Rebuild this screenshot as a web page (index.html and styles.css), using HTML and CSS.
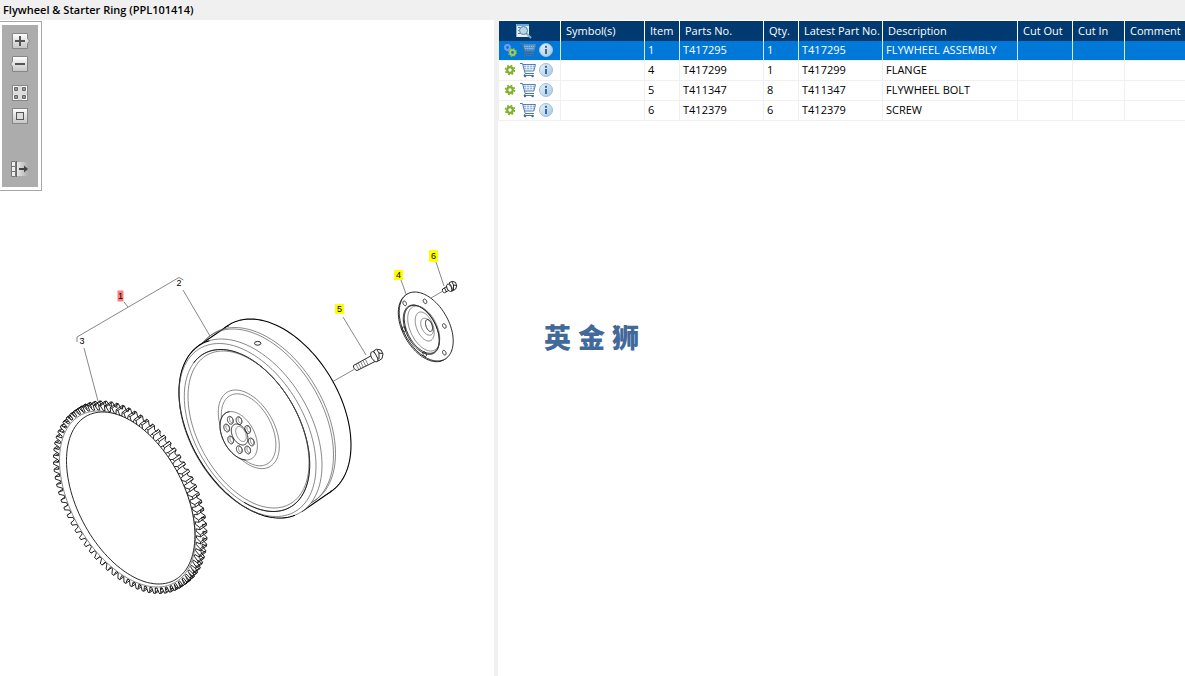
FILE: index.html
```
<!DOCTYPE html>
<html lang="en">
<head>
<meta charset="utf-8">
<title>Flywheel &amp; Starter Ring (PPL101414)</title>
<link rel="stylesheet" href="styles.css">
</head>
<body>
<svg class="defs" aria-hidden="true">
  <defs>
    <linearGradient id="face" x1="0" y1="0" x2="0" y2="1"><stop offset="0" stop-color="#fff"/><stop offset="1" stop-color="#c4c4c4"/></linearGradient>
    <linearGradient id="fade" x1="0" y1="0" x2="1" y2="0"><stop offset="0" stop-color="#e8e8e8"/><stop offset="1" stop-color="#acacac"/></linearGradient>
    <linearGradient id="disc" x1="0" y1="0" x2="1" y2="1"><stop offset="0" stop-color="#e9f3fa"/><stop offset="1" stop-color="#a5c8e2"/></linearGradient>
    <symbol id="cart" viewBox="0 0 16 16">
      <path d="M3.500 3h12l-1.700 5.500H5z" fill="#d3e2f2"/>
      <path d="M4 4.500h11M4.500 6.500h10" stroke="#9ab8da"/>
      <path d="M6.500 3v5M9.500 3v5M12.500 3v5" stroke="#fff" stroke-width="0.6"/>
      <path d="M3 2.500h12.500l-1.700 6.500H5" fill="none" stroke="#5580b5"/>
      <path d="M0 1.500h2.500l2.700 10h8.800M5.500 11.500l-1.500 2h9.500" fill="none" stroke="#4c78ad"/>
      <circle cx="5" cy="14" r="1.200" fill="#3f6ca3"/><circle cx="12.600" cy="14" r="1.200" fill="#3f6ca3"/>
    </symbol>
    <symbol id="cart-on" viewBox="0 0 16 16">
      <path d="M3.500 3h12l-1.700 5.500H5z" fill="#4d93d8"/>
      <path d="M4 4.500h11M4.500 6.500h10" stroke="#9dbbd9" stroke-dasharray="1.500 0.800"/>
      <path d="M3 2.500h12.500l-1.700 6.500H5" fill="none" stroke="#6c829e"/>
      <path d="M0 1.500h2.500l2.700 10h8.800M5.500 11.500l-1.500 2h9.500" fill="none" stroke="#5b6f8c"/>
      <circle cx="5" cy="14" r="1.200" fill="#4f6584"/><circle cx="12.600" cy="14" r="1.200" fill="#4f6584"/>
    </symbol>
    <symbol id="info" viewBox="0 0 14 14">
      <circle cx="7" cy="7" r="6.5" fill="url(#disc)" stroke="#9dbfdb"/>
      <rect x="6" y="2.8" width="2" height="2" fill="#3b6a9b"/><rect x="6" y="6" width="2" height="5" fill="#3b6a9b"/>
    </symbol>
    <symbol id="gear" viewBox="0 0 12 12">
      <circle cx="6" cy="6" r="4.5" fill="none" stroke="#7fb02a" stroke-width="1.6" stroke-dasharray="1.8 1.734"/>
      <circle cx="6" cy="6" r="2.800" fill="none" stroke="#7fb02a" stroke-width="2.200"/>
    </symbol>
    <symbol id="gears" viewBox="0 0 14 14">
      <circle cx="4.5" cy="4.5" r="3.9" fill="none" stroke="#2f67cd" stroke-width="1.4" stroke-dasharray="1.6 1.46"/>
      <circle cx="4.5" cy="4.5" r="2.4" fill="none" stroke="#6fa0ee" stroke-width="2"/>
      <circle cx="9.5" cy="9.5" r="3.9" fill="none" stroke="#84b534" stroke-width="1.4" stroke-dasharray="1.6 1.46"/>
      <circle cx="9.5" cy="9.5" r="2.4" fill="none" stroke="#a5cc5c" stroke-width="2"/>
    </symbol>
  </defs>
</svg>

<header class="title-bar"><h1>Flywheel &amp; Starter Ring (PPL101414)</h1></header>
<main class="workspace">
  <section class="diagram" aria-label="Exploded diagram">
    <svg id="drawing" class="drawing" width="494" height="656" viewBox="0 20 494 656" role="img" aria-label="Flywheel and starter ring"></svg>
    <div class="toolbar">
      <div class="tools">
        <button type="button" aria-label="Zoom in"><svg width="20" height="16" viewBox="0 0 20 16"><path d="M2.5.5h15v5l2 2.5-2 2.5v5h-15z" fill="url(#face)" stroke="#868686"/><path d="M5 8h10M10 3v10" stroke="#555" stroke-width="2"/></svg></button>
        <button type="button" aria-label="Zoom out"><svg width="20" height="16" viewBox="0 0 20 16"><path d="M17.5.5h-15v5L.5 8l2 2.5v5h15z" fill="url(#face)" stroke="#868686"/><path d="M5 8h10" stroke="#555" stroke-width="2"/></svg></button>
        <button type="button" class="group" aria-label="Fit to window"><svg width="20" height="16" viewBox="0 0 20 16"><rect x="2.5" y=".5" width="15" height="15" fill="#fff" stroke="#868686"/><path d="M8 1h4v5h5v4h-5v5H8v-5H3V6h5z" fill="#ddd"/><path d="M4.500 2.500h3v3h-3zM12.500 2.500h3v3h-3zM4.500 10.500h3v3h-3zM12.500 10.500h3v3h-3z" fill="#999" stroke="#666"/></svg></button>
        <button type="button" aria-label="Actual size"><svg width="20" height="16" viewBox="0 0 20 16"><rect x="2.5" y=".5" width="15" height="15" fill="url(#face)" stroke="#868686"/><rect x="6.500" y="4.500" width="7" height="7" fill="#ddd" stroke="#555"/></svg></button>
        <button type="button" class="last" aria-label="Show parts list"><svg width="20" height="16" viewBox="0 0 20 16"><path d="M1.500.500h4v15h-4z" fill="#eee" stroke="#777"/><path d="M2 5.500h3M2 10.500h3" stroke="#777"/><path d="M7 1h11v14H7z" fill="url(#fade)"/><path d="M6.500 0v16" stroke="#666"/><path d="M9 8h6" stroke="#444" stroke-width="2"/><path d="M14 4.500l4 3.500-4 3.500z" fill="#444"/></svg></button>
      </div>
    </div>
  </section>
  <section class="parts">
    <table>
      <colgroup><col class="c-icons"><col class="c-part"><col class="c-num"><col class="c-part"><col class="c-num"><col class="c-part"><col class="c-desc"><col class="c-out"><col class="c-in"><col></colgroup>
      <thead>
        <tr>
          <th scope="col" class="icons"><button type="button" aria-label="Search list"><svg width="18" height="16" viewBox="0 0 18 16"><path d="M1 1h13v13H1z" fill="#e8f0f6"/><path d="M1 1h13v2H1z" fill="#69a8db"/><path d="M1.500 1v13" stroke="#7db4de"/><path d="M3 4.500h2M3 7.500h1M3 10.500h2" stroke="#547fa9"/><path d="M11.500 10.500l4.500 4.500" stroke="#87a9c8" stroke-width="2"/><circle cx="8.500" cy="7.500" r="4" fill="#b9d5eb" stroke="#5c7d9e"/></svg></button></th>
          <th scope="col">Symbol(s)</th><th scope="col">Item</th><th scope="col">Parts No.</th><th scope="col">Qty.</th><th scope="col">Latest Part No.</th><th scope="col">Description</th><th scope="col">Cut Out</th><th scope="col">Cut In</th><th scope="col">Comment</th>
        </tr>
      </thead>
      <tbody>
        <tr class="selected"><td><div class="actions"><button type="button" aria-label="Assembly"><svg width="14" height="14"><use href="#gears"/></svg></button><button type="button" aria-label="Add to cart"><svg width="16" height="16"><use href="#cart-on"/></svg></button><button type="button" aria-label="Information"><svg width="14" height="14"><use href="#info"/></svg></button></div></td><td></td><td>1</td><td>T417295</td><td>1</td><td>T417295</td><td>FLYWHEEL ASSEMBLY</td><td></td><td></td><td></td></tr>
        <tr><td><div class="actions"><button type="button" aria-label="Part"><svg width="12" height="12"><use href="#gear"/></svg></button><button type="button" aria-label="Add to cart"><svg width="16" height="16"><use href="#cart"/></svg></button><button type="button" aria-label="Information"><svg width="14" height="14"><use href="#info"/></svg></button></div></td><td></td><td>4</td><td>T417299</td><td>1</td><td>T417299</td><td>FLANGE</td><td></td><td></td><td></td></tr>
        <tr><td><div class="actions"><button type="button" aria-label="Part"><svg width="12" height="12"><use href="#gear"/></svg></button><button type="button" aria-label="Add to cart"><svg width="16" height="16"><use href="#cart"/></svg></button><button type="button" aria-label="Information"><svg width="14" height="14"><use href="#info"/></svg></button></div></td><td></td><td>5</td><td>T411347</td><td>8</td><td>T411347</td><td>FLYWHEEL BOLT</td><td></td><td></td><td></td></tr>
        <tr><td><div class="actions"><button type="button" aria-label="Part"><svg width="12" height="12"><use href="#gear"/></svg></button><button type="button" aria-label="Add to cart"><svg width="16" height="16"><use href="#cart"/></svg></button><button type="button" aria-label="Information"><svg width="14" height="14"><use href="#info"/></svg></button></div></td><td></td><td>6</td><td>T412379</td><td>6</td><td>T412379</td><td>SCREW</td><td></td><td></td><td></td></tr>
      </tbody>
    </table>
    <div class="brand" lang="zh"><span>英</span><span>金</span><span>狮</span></div>
  </section>
</main>
<script src="drawing.js"></script>
</body>
</html>
```
FILE: styles.css
```
* { box-sizing: border-box; }
body {
  margin: 0;
  min-height: 100vh;
  display: flex;
  flex-direction: column;
  background: #fff;
  color: #000;
  font-family: "Open Sans", "Noto Sans", sans-serif;
  font-size: 11px;
}
.defs { position: absolute; width: 0; height: 0; }
button { display: block; margin: 0; padding: 0; border: 0; background: none; cursor: pointer; }
button svg { display: block; }
.title-bar { height: 20px; padding: 0 3px; background: #f0f0f0; }
h1 { margin: 0; font-size: 11px; line-height: 20px; font-weight: 600; }
.workspace {
  flex: 1;
  display: grid;
  grid-template-columns: minmax(0, 498fr) minmax(0, 687fr);
}
.diagram { position: relative; border-right: 4px solid #f0f0f0; overflow: hidden; }
.drawing { display: block; }
.toolbar {
  position: absolute;
  left: 0;
  top: 1px;
  padding: 3px 3px 3px 2px;
  border: 1px solid #a5a5a5;
  border-left: 0;
  background: #fff;
}
.tools { display: flex; flex-direction: column; gap: 7px; padding: 8px 8px 10px; background: #acacac; }
.tools .group { margin-top: 6px; }
.tools .last { margin-top: 30px; }

.parts { padding-top: 1px; }
table { width: 100%; table-layout: fixed; border-collapse: separate; border-spacing: 0; border-left: 1px solid #f0f0f0; }
.c-icons { width: 62px; }
.c-part { width: 84px; }
.c-num { width: 35px; }
.c-desc { width: 135px; }
.c-out { width: 55px; }
.c-in { width: 52px; }
th, td { height: 20px; padding: 0 0 0 3px; text-align: left; font-weight: 400; white-space: nowrap; border-right: 1px solid #f0f0f0; }
th { padding-left: 5px; background: #003a70; color: #fff; line-height: 20px; border-right-color: #fff; }
td { border-bottom: 1px solid #f0f0f0; line-height: 17px; vertical-align: top; }
th:last-child, td:last-child { border-right: 0; }
.selected td { background: #0078d7; color: #fff; border-right-color: #d5e7f6; }
th.icons { padding: 0; }
.icons button { margin: 0 auto 0 16px; }
td:first-child { padding-left: 4px; }
.actions { display: grid; grid-template-columns: 14px 16px 14px; gap: 3px; align-items: center; justify-items: center; height: 18px; }
.brand {
  display: flex;
  gap: 7px;
  margin: 196px 0 0 46px;
  color: #41699a;
  font-family: "Noto Sans CJK SC", sans-serif;
  font-size: 27px;
  font-weight: 900;
  line-height: 40px;
}

.ink { fill: none; stroke: #111; stroke-width: 0.9; }
.bold { fill: #fff; stroke: #000; stroke-width: 1.1; }
.thin { fill: none; stroke: #555; stroke-width: 0.7; }
.solid { fill: #fff; }
.tag-on { fill: #ff7f7f; }
.tag { fill: #ff0; }
.num { font-family: "Liberation Sans", Arial, sans-serif; font-size: 9px; text-anchor: middle; }
```
FILE: drawing.js
```
const svg = document.getElementById("drawing");
const make = (name, attrs, text) => {
  const node = document.createElementNS("http://www.w3.org/2000/svg", name);
  for (const key in attrs) node.setAttribute(key, attrs[key]);
  if (text) node.textContent = text;
  svg.appendChild(node);
};
const path = (d, cls) => make("path", { d, class: cls });

// Point on a slanted ellipse with half-width w, half-height h and lean b.
const at = (e, t) => {
  const [cx, cy, w, h, b] = e;
  const d = Math.sqrt(h * h - b * b);
  return [cx + w * Math.cos(t), cy + b * Math.cos(t) + d * Math.sin(t)];
};
const line = (pts) => "M" + pts.map((p) => p[0].toFixed(2) + " " + p[1].toFixed(2)).join("L");
const trace = (pts) => line(pts) + "Z";
const oval = (e, cls) => {
  const pts = [];
  for (let i = 0; i < 120; i++) pts.push(at(e, (i / 120) * 2 * Math.PI));
  path(trace(pts), cls);
};
const arc = (e, from, to, cls) => {
  const pts = [];
  for (let i = 0; i <= 80; i++) pts.push(at(e, from + ((to - from) * i) / 80));
  path(line(pts), cls);
};

// Starter ring
const TEETH = 76;
const tip = [127, 499.5, 73.5, 94, 41];
const root = [127.5, 499, 69, 89, 39];
const shift = ([x, y]) => [x + 6.5, y - 4.5];
const profile = [];
const edges = [];
for (let i = 0; i < TEETH; i++) {
  const a = (k) => ((i + k) / TEETH) * 2 * Math.PI;
  const quad = [at(root, a(0)), at(tip, a(0.2)), at(tip, a(0.5)), at(root, a(0.65))];
  profile.push(...quad);
  edges.push(quad[1], quad[2]);
}
path(trace(profile.map(shift)), "ink solid");
edges.forEach((p) => path(line([p, shift(p)]), "ink"));
path(trace(profile), "ink solid");
oval([127.500, 499, 68, 88, 38.500], "thin solid");
oval([130.7, 498, 64.2, 86, 37.500], "ink solid");

// Flywheel body
const front = [250.5, 428.5, 71.5, 89.5, 36.5];
const back = [279.5, 408.5, 71.5, 89.5, 36.5];
const depth = Math.sqrt(89.5 ** 2 - 36.5 ** 2);
const tangent = Math.atan2(29 * depth, 20 * 71.5 + 29 * 36.5);
oval(back, "bold");
path(trace([at(front, tangent), at(back, tangent), at(back, tangent + Math.PI), at(front, tangent + Math.PI)]), "bold");
oval([279, 409, 70.8, 88.800, 36], "solid");
oval([264, 417, 71.500, 89.500, 36.500], "thin");
oval([262, 418.500, 71.500, 89.500, 36.500], "thin");
oval(front, "thin solid");
arc(front, 0.9, 4.1, "bold");
oval([247.5, 430, 68.500, 86.500, 36], "thin");
const rim = [247, 430.5, 62.700, 81, 34];
oval(rim, "thin");
arc(rim, 3.7, 7.9, "ink");
oval([248.5, 429.5, 60.500, 78.500, 33], "thin");
oval([248.8, 429.3, 30.500, 39.300, 17], "thin");
oval([248.6, 429.8, 27.300, 36, 15], "thin");
oval([238.7, 435.8, 18.700, 24.200, 10], "thin solid");
arc([238.7, 435.8, 18.700, 24.200, 10], 1.2, 4.2, "ink");
oval([239.6, 434.5, 8.300, 10.500, 4], "ink");
oval([241, 434, 5.300, 7.500, 3], "thin");
[[230.3, 420.3], [239, 420.7], [247.7, 429.5], [251.3, 442], [247.7, 450], [239.3, 449.7], [230.7, 440], [226.7, 428]].forEach(([x, y]) => {
  oval([x, y, 2.900, 3.900, 1], "ink");
  oval([x + 1, y - 0.5, 1.800, 3, 1], "thin");
});
make("ellipse", { cx: 257.7, cy: 343.3, rx: 3.2, ry: 1.9, class: "ink" });

// Flange
oval([425.3, 327.2, 27, 34.500, 14.5], "ink solid");
oval([426.2, 326.5, 27, 34.500, 14.5], "ink solid");
oval([421.3, 329.7, 18, 24.700, 11], "ink");
oval([421.8, 329.3, 17.500, 24, 10.800], "ink");
oval([423.7, 328.5, 16, 22.500, 10], "thin");
oval([424.7, 326.5, 9.500, 14.500, 6], "thin");
oval([427, 326.7, 6.300, 8.500, 3.5], "thin");
oval([429, 325.5, 3.500, 6, 2.500], "ink");
[[404.7, 303.3], [425, 301.3], [444.3, 326], [444.3, 352.7], [424.7, 354.2], [403.7, 329.3]].forEach(([x, y]) => {
  oval([x, y, 1.800, 2.300, 0.8], "ink");
});

// Flywheel bolt
path("M353.5 365.500l19-10.500 3.500 6-19 9.500c-2 0-4-3-3.500-5z", "ink solid");
path("M356 364l3 6M358.300 363l3 6M360.600 361.700l3 6M363 360.500l3 6M365.300 359.200l3 6", "thin");
path("M371.500 352c2-2 8 5 6 9.500-3 2-9-6-6-9.500z", "ink solid");
path("M373.500 351l3-1.800 4.500.8 2 4-1 4.500-3.500 2.500c-1-4-3-7-5-10z", "ink solid");
path("M377 350l2 3 3.500.5M379 353v6", "ink");

// Screw
path("M442.500 289l6-3.500 2 4-6 3.300c-1.500 0-2.500-2-2-3.800z", "ink solid");
path("M444.500 288l2 4M446.700 287l2 4", "ink");
path("M447 284.500c2-2 6 3.500 4.500 7-3 .5-6-4-4.500-7z", "ink solid");
path("M449 283l3-1.700 3.500 1 1.200 3.500-1 3.200-3.200 2c0-3-1.500-6-3.500-8z", "ink solid");
path("M452 282l1.500 3 3 .5M453.500 285v5", "ink");

// Leader lines
path("M77 342v-5L179 277.500l4.500 2.500M124 302l4 5M84 348l14 53M183 290l27 46M343 317l23 38M332 382l22-12.500M401 280l5 14M436 262l8 24M431 298l12-7", "thin");

// Callouts
[["1", 120.5, 296, "tag-on", 6, 11], ["4", 398.5, 275, "tag", 9, 10], ["5", 339.500, 309, "tag", 9, 10], ["6", 433.500, 256, "tag", 9, 12]].forEach(([n, x, y, cls, w, h]) => {
  make("rect", { x: x - w / 2, y: y - h / 2, width: w, height: h, class: cls });
  make("text", { x, y: y + 3, class: "num" }, n);
});
make("text", { x: 179, y: 286, class: "num" }, "2");
make("text", { x: 82, y: 344, class: "num" }, "3");
```
